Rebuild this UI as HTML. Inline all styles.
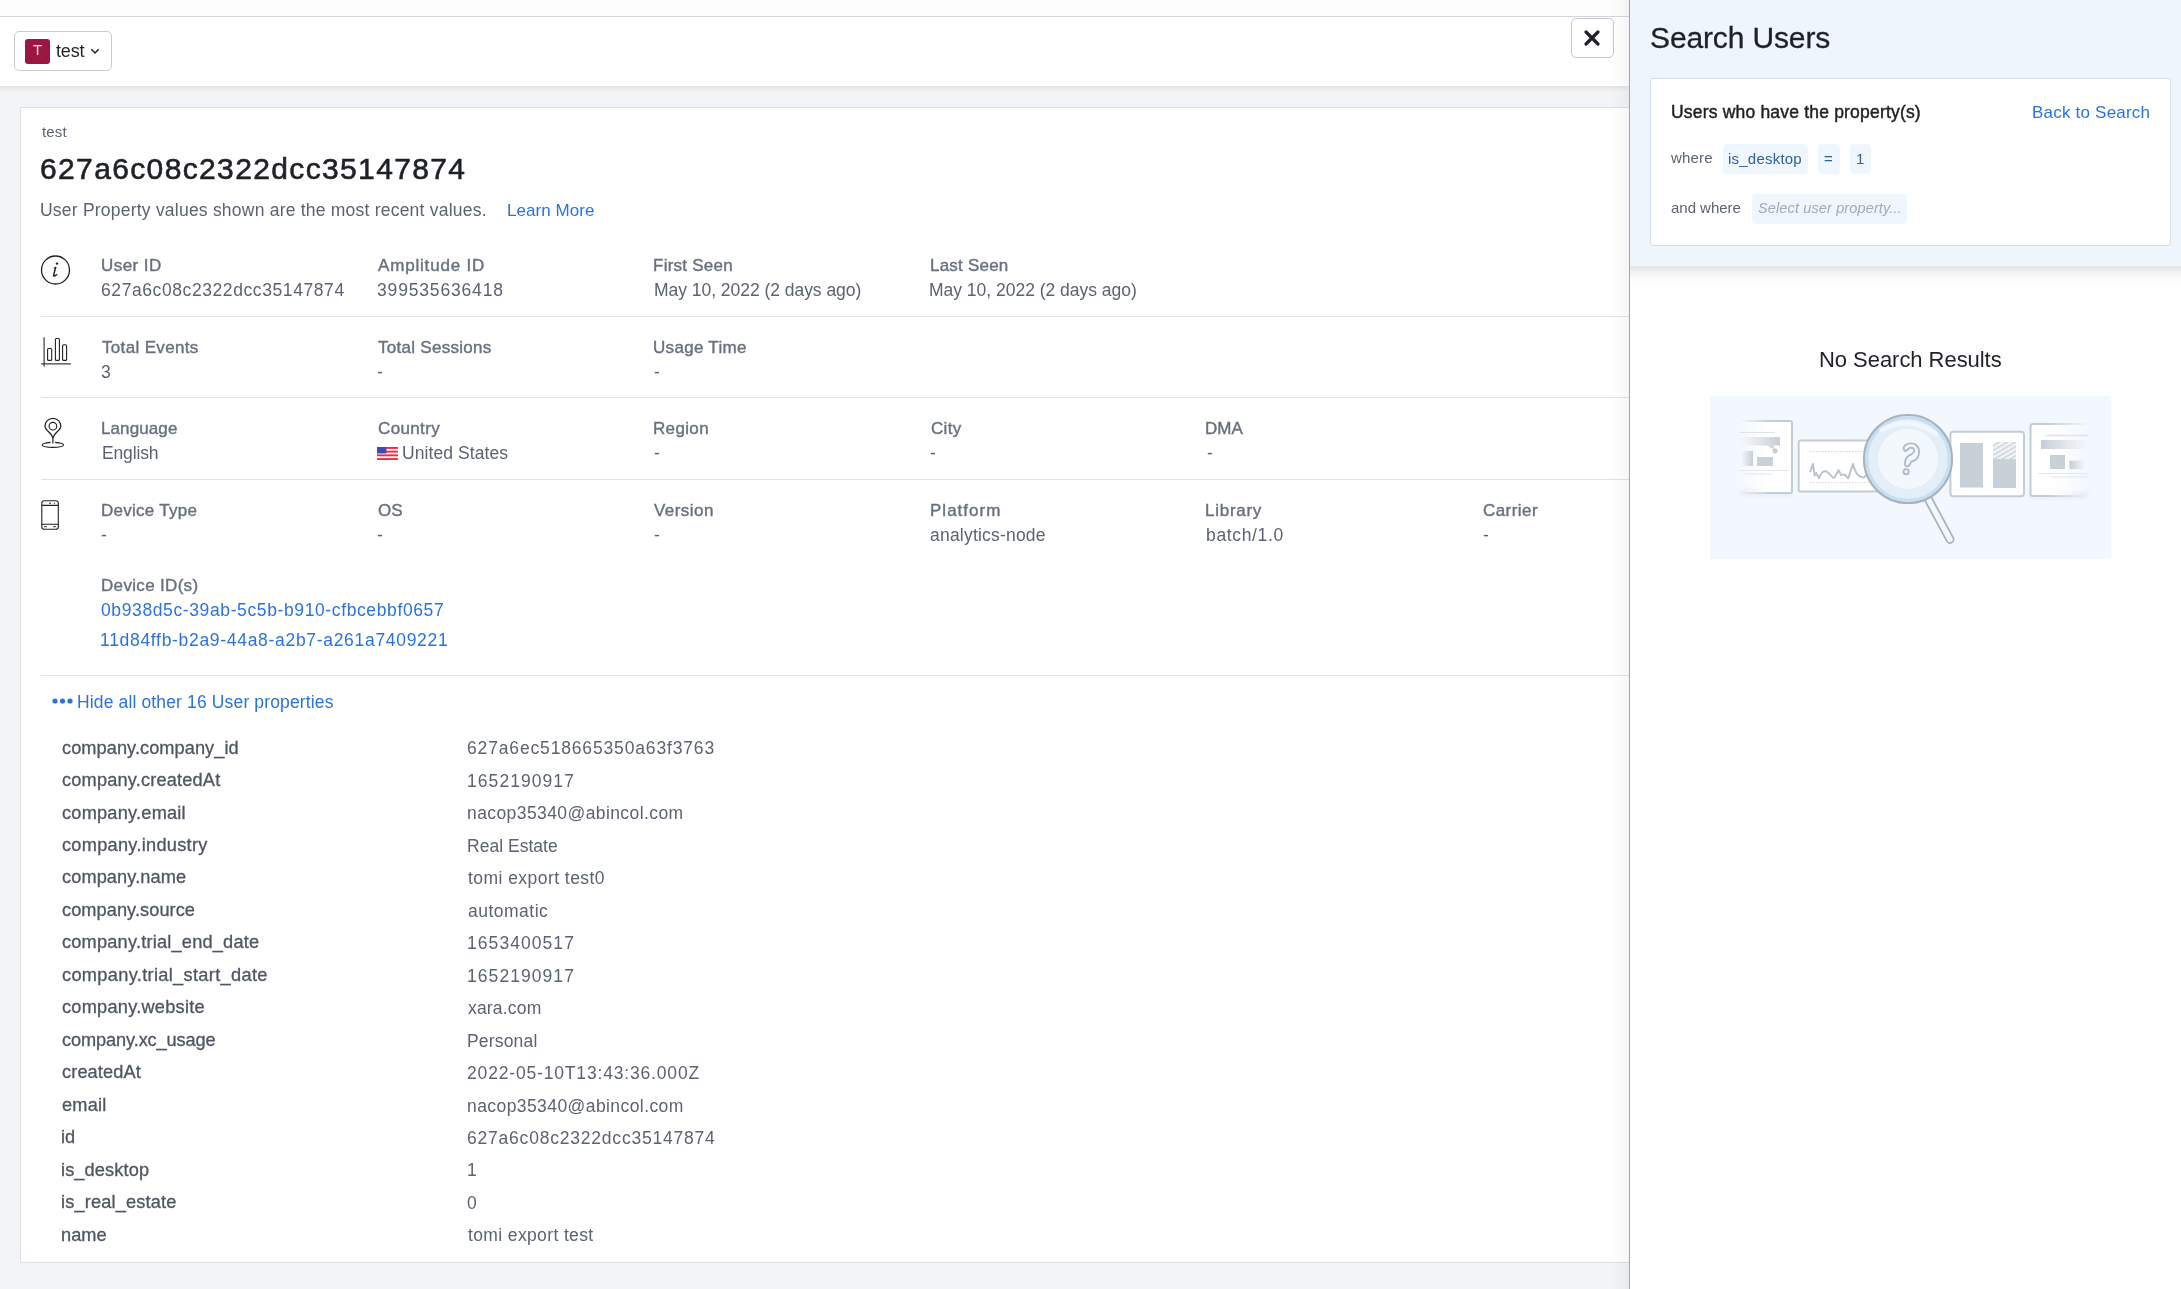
<!DOCTYPE html>
<html><head><meta charset="utf-8"><style>
*{box-sizing:border-box;margin:0;padding:0}
html,body{width:2181px;height:1289px;overflow:hidden}
body{position:relative;background:#f3f4f6;font-family:"Liberation Sans",sans-serif;color:#5b6271;-webkit-font-smoothing:antialiased}
.a{position:absolute;white-space:nowrap}
#topstrip{left:0;top:0;width:1629px;height:17px;background:#fdfdfd;border-bottom:1px solid #d6d8dd}
#header{left:-12px;top:17px;width:1641px;height:69px;background:#fff;box-shadow:0 2px 5px rgba(0,0,0,.09)}
#dd{left:14px;top:31px;width:98px;height:40px;border:1px solid #c8cbd2;border-radius:5px;background:#fff}
#ddsq{left:25px;top:39px;width:25px;height:25px;background:#9b1641;border-radius:3px;color:#f3d3dc;font-size:15px;text-align:center;line-height:21px;will-change:transform}
#close{left:1571px;top:18px;width:43px;height:40px;border:1px solid #c6c9d0;border-radius:5px;background:#fff}
#card{left:20px;top:107px;width:1640px;height:1156px;background:#fff;border:1px solid #dcdee3}
.hr{position:absolute;left:41px;width:1600px;height:1px;background:#dfe1e5}
#panel{left:1629px;top:-30px;width:552px;height:1360px;background:#fefefe;border-left:1px solid #a2a6af;box-shadow:-6px 0 14px rgba(0,0,0,.05)}
#ptop{left:1630px;top:0;width:551px;height:266px;background:#eef5fd}
#ptopsh{left:1630px;top:266px;width:551px;height:18px;background:linear-gradient(rgba(0,0,0,.105),rgba(0,0,0,.045) 35%,rgba(0,0,0,.012) 70%,rgba(0,0,0,0))}
#pcard{left:1650px;top:78px;width:521px;height:168px;background:#fff;border:1px solid #d9dce2;border-radius:3px}
.chip{position:absolute;background:#eff6fe;border-radius:4px}
.t{position:absolute;white-space:nowrap;will-change:transform}
.dd{color:#1f2327}
.sub{color:#5b6271}
.title{color:#1e2125;-webkit-text-stroke:0.6px #1e2125}
.val{color:#5b6271}
.lnk{color:#2a73de}
.lbl{color:#687080;-webkit-text-stroke:0.4px #687080}
.key{color:#4e5563;-webkit-text-stroke:0.3px #4e5563}
.ptitle{color:#1e2125;-webkit-text-stroke:0.3px #1e2125}
.pbold{color:#1e2125;-webkit-text-stroke:0.45px #1e2125}
.small{color:#5b6271}
.chipt{color:#2f5ea5}
.ph{color:#a4aab4;font-style:italic}
.nsr{color:#1e2125}
</style></head><body>
<div class="a" id="topstrip"></div>
<div class="a" id="header"></div>
<div class="a" id="dd"></div>
<div class="a" id="ddsq">T</div>
<svg class="a" style="left:90px;top:47px" width="10" height="8" viewBox="0 0 10 8"><path d="M1.3 2.3 L5 6 L8.7 2.3" fill="none" stroke="#222" stroke-width="1.5"/></svg>
<div class="a" id="close"></div>
<svg class="a" style="left:1583px;top:29px" width="18" height="18" viewBox="0 0 18 18"><path d="M3 3 L15 15 M15 3 L3 15" stroke="#1f2124" stroke-width="3.2" stroke-linecap="round"/></svg>
<div class="a" id="card"></div>
<div class="hr" style="top:316px"></div>
<div class="hr" style="top:397px"></div>
<div class="hr" style="top:479px"></div>
<div class="hr" style="top:675px"></div>
<svg class="a" style="left:40px;top:255px" width="32" height="32" viewBox="0 0 32 32"><circle cx="15.5" cy="15" r="14" fill="none" stroke="#1f2124" stroke-width="1.3"/><circle cx="17" cy="8.6" r="1.2" fill="#1f2124"/><path d="M15.6 12.5 L13.6 20.2 Q13.3 21.6 14.8 20.8 L16.6 19.6" fill="none" stroke="#1f2124" stroke-width="1.4" stroke-linecap="round"/><path d="M14.2 13 L15.8 12.5" stroke="#1f2124" stroke-width="1.2" stroke-linecap="round"/></svg>
<svg class="a" style="left:36px;top:330px" width="40" height="40" viewBox="0 0 40 40"><path d="M8.1 7.3 V36.8 M5.1 33.8 H34.8" stroke="#3a3e45" stroke-width="1.2" fill="none"/><rect x="11.6" y="18.5" width="4.1" height="11.9" rx="1" fill="none" stroke="#1f2124" stroke-width="1.1"/><rect x="19.4" y="8.5" width="4" height="21.9" rx="1" fill="none" stroke="#1f2124" stroke-width="1.1"/><rect x="26.6" y="14.8" width="4" height="15.6" rx="1" fill="none" stroke="#1f2124" stroke-width="1.1"/></svg>
<svg class="a" style="left:36px;top:410px" width="40" height="40" viewBox="0 0 40 40"><path d="M16.9 33.5 V28.5 C16.3 25 14 23 11.6 20.8 C9.8 19 8.9 17.8 8.9 16.3 A8 8 0 0 1 24.9 16.3 C24.9 17.8 24 19 22.2 20.8 C19.8 23 17.5 25 16.9 28.5" fill="none" stroke="#1f2124" stroke-width="1.2"/><circle cx="16.9" cy="16.2" r="3.8" fill="none" stroke="#1f2124" stroke-width="1.15"/><path d="M14.6 32.4 Q6.2 33.2 6.2 34.8 Q6.2 37.4 16.9 37.4 Q27.5 37.4 27.5 34.8 Q27.5 33.2 19.1 32.4" fill="none" stroke="#1f2124" stroke-width="1.1"/></svg>
<svg class="a" style="left:36px;top:495px" width="40" height="40" viewBox="0 0 40 40"><rect x="5.8" y="5.8" width="16.5" height="28.5" rx="2.6" fill="none" stroke="#1f2124" stroke-width="1.1"/><path d="M5.8 10.4 H22.3 M5.8 29.2 H22.3" stroke="#1f2124" stroke-width="1.1"/><path d="M13 8.2 H15" stroke="#1f2124" stroke-width="1"/><circle cx="18.5" cy="8.2" r="0.6" fill="#1f2124"/><path d="M8.2 31.7 H10.8 M17.2 31.7 H19.8" stroke="#1f2124" stroke-width="1"/></svg>
<svg class="a" style="left:377px;top:447px" width="21" height="13" viewBox="0 0 21 13"><rect width="21" height="13" fill="#fff"/><g fill="#e8313c"><rect y="0" width="21" height="1.9"/><rect y="3.7" width="21" height="1.9"/><rect y="7.4" width="21" height="1.9"/><rect y="11.1" width="21" height="1.9"/></g><rect width="9.5" height="6.5" fill="#4149b0"/></svg>
<svg class="a" style="left:52px;top:697px" width="22" height="8" viewBox="0 0 22 8"><circle cx="3" cy="4" r="2.6" fill="#2a73de"/><circle cx="10.5" cy="4" r="2.6" fill="#2a73de"/><circle cx="18" cy="4" r="2.6" fill="#2a73de"/></svg>
<div class="t dd" id="ddtest" style="left:56.00px;top:40.46px;font-size:18px;line-height:22px;letter-spacing:-0.180px">test</div>
<div class="t sub" id="smalltest" style="left:41.90px;top:122.80px;font-size:15px;line-height:18px;letter-spacing:0.180px">test</div>
<div class="t title" id="title" style="left:40.00px;top:150.80px;font-size:30px;line-height:36px;letter-spacing:1.361px">627a6c08c2322dcc35147874</div>
<div class="t val" id="subtitle" style="left:40.10px;top:200.44px;font-size:17.5px;line-height:21px;letter-spacing:0.221px">User Property values shown are the most recent values.</div>
<div class="t lnk" id="learn" style="left:507.46px;top:201.11px;font-size:17px;line-height:20px;letter-spacing:0.060px">Learn More</div>
<div class="t lbl" id="l00" style="left:101.00px;top:256.11px;font-size:17px;line-height:20px;letter-spacing:0.450px">User ID</div>
<div class="t val" id="v00" style="left:101.00px;top:280.44px;font-size:17.5px;line-height:21px;letter-spacing:0.587px">627a6c08c2322dcc35147874</div>
<div class="t lbl" id="l01" style="left:378.30px;top:256.11px;font-size:17px;line-height:20px;letter-spacing:0.818px">Amplitude ID</div>
<div class="t val" id="v01" style="left:377.40px;top:280.44px;font-size:17.5px;line-height:21px;letter-spacing:0.835px">399535636418</div>
<div class="t lbl" id="l02" style="left:653.35px;top:256.11px;font-size:17px;line-height:20px;letter-spacing:0.250px">First Seen</div>
<div class="t val" id="v02" style="left:653.80px;top:280.44px;font-size:17.5px;line-height:21px;letter-spacing:-0.037px">May 10, 2022 (2 days ago)</div>
<div class="t lbl" id="l03" style="left:929.75px;top:256.11px;font-size:17px;line-height:20px;letter-spacing:0.214px">Last Seen</div>
<div class="t val" id="v03" style="left:929.30px;top:280.44px;font-size:17.5px;line-height:21px;letter-spacing:-0.015px">May 10, 2022 (2 days ago)</div>
<div class="t lbl" id="l10" style="left:102.17px;top:338.11px;font-size:17px;line-height:20px;letter-spacing:0.335px">Total Events</div>
<div class="t val" id="v10" style="left:101.00px;top:362.44px;font-size:17.5px;line-height:21px">3</div>
<div class="t lbl" id="l11" style="left:378.07px;top:338.11px;font-size:17px;line-height:20px;letter-spacing:0.280px">Total Sessions</div>
<div class="t val" id="v11" style="left:377.40px;top:362.44px;font-size:17.5px;line-height:21px">-</div>
<div class="t lbl" id="l12" style="left:652.99px;top:338.11px;font-size:17px;line-height:20px;letter-spacing:0.300px">Usage Time</div>
<div class="t val" id="v12" style="left:653.80px;top:362.44px;font-size:17.5px;line-height:21px">-</div>
<div class="t lbl" id="l20" style="left:101.09px;top:419.11px;font-size:17px;line-height:20px;letter-spacing:0.103px">Language</div>
<div class="t val" id="v20" style="left:101.54px;top:443.44px;font-size:17.5px;line-height:21px;letter-spacing:-0.150px">English</div>
<div class="t lbl" id="l21" style="left:378.07px;top:419.11px;font-size:17px;line-height:20px;letter-spacing:0.368px">Country</div>
<div class="t val" id="v21" style="left:401.86px;top:443.44px;font-size:17.5px;line-height:21px;letter-spacing:0.075px">United States</div>
<div class="t lbl" id="l22" style="left:652.99px;top:419.11px;font-size:17px;line-height:20px;letter-spacing:0.342px">Region</div>
<div class="t val" id="v22" style="left:653.80px;top:443.44px;font-size:17.5px;line-height:21px">-</div>
<div class="t lbl" id="l23" style="left:930.65px;top:419.11px;font-size:17px;line-height:20px;letter-spacing:0.330px">City</div>
<div class="t val" id="v23" style="left:930.20px;top:443.44px;font-size:17.5px;line-height:21px">-</div>
<div class="t lbl" id="l24" style="left:1205.25px;top:419.11px;font-size:17px;line-height:20px">DMA</div>
<div class="t val" id="v24" style="left:1206.60px;top:443.44px;font-size:17.5px;line-height:21px">-</div>
<div class="t lbl" id="l30" style="left:101.00px;top:501.11px;font-size:17px;line-height:20px;letter-spacing:0.261px">Device Type</div>
<div class="t val" id="v30" style="left:101.00px;top:525.44px;font-size:17.5px;line-height:21px">-</div>
<div class="t lbl" id="l31" style="left:378.07px;top:501.11px;font-size:17px;line-height:20px">OS</div>
<div class="t val" id="v31" style="left:377.40px;top:525.44px;font-size:17.5px;line-height:21px">-</div>
<div class="t lbl" id="l32" style="left:653.89px;top:501.11px;font-size:17px;line-height:20px;letter-spacing:0.450px">Version</div>
<div class="t val" id="v32" style="left:653.80px;top:525.44px;font-size:17.5px;line-height:21px">-</div>
<div class="t lbl" id="l33" style="left:929.75px;top:501.11px;font-size:17px;line-height:20px;letter-spacing:1.016px">Platform</div>
<div class="t val" id="v33" style="left:930.20px;top:525.44px;font-size:17.5px;line-height:21px;letter-spacing:0.208px">analytics-node</div>
<div class="t lbl" id="l34" style="left:1205.25px;top:501.11px;font-size:17px;line-height:20px;letter-spacing:0.735px">Library</div>
<div class="t val" id="v34" style="left:1205.70px;top:525.44px;font-size:17.5px;line-height:21px;letter-spacing:0.653px">batch/1.0</div>
<div class="t lbl" id="l35" style="left:1482.64px;top:501.11px;font-size:17px;line-height:20px;letter-spacing:0.435px">Carrier</div>
<div class="t val" id="v35" style="left:1483.00px;top:525.44px;font-size:17.5px;line-height:21px">-</div>
<div class="t lbl" id="devid" style="left:101.00px;top:576.11px;font-size:17px;line-height:20px;letter-spacing:0.327px">Device ID(s)</div>
<div class="t lnk" id="link1" style="left:101.00px;top:600.44px;font-size:17.5px;line-height:21px;letter-spacing:0.617px">0b938d5c-39ab-5c5b-b910-cfbcebbf0657</div>
<div class="t lnk" id="link2" style="left:100.10px;top:630.44px;font-size:17.5px;line-height:21px;letter-spacing:0.694px">11d84ffb-b2a9-44a8-a2b7-a261a7409221</div>
<div class="t lnk" id="hide" style="left:77.00px;top:691.94px;font-size:17.5px;line-height:21px;letter-spacing:0.141px">Hide all other 16 User properties</div>
<div class="t key" id="k0" style="left:61.72px;top:736.59px;font-size:18.2px;line-height:22px;letter-spacing:0.064px">company.company_id</div>
<div class="t val" id="p0" style="left:467.36px;top:738.34px;font-size:17.5px;line-height:21px;letter-spacing:0.845px">627a6ec518665350a63f3763</div>
<div class="t key" id="k1" style="left:61.72px;top:769.06px;font-size:18.2px;line-height:22px;letter-spacing:0.180px">company.createdAt</div>
<div class="t val" id="p1" style="left:467.36px;top:770.81px;font-size:17.5px;line-height:21px;letter-spacing:1.060px">1652190917</div>
<div class="t key" id="k2" style="left:61.72px;top:801.53px;font-size:18.2px;line-height:22px;letter-spacing:0.225px">company.email</div>
<div class="t val" id="p2" style="left:467.36px;top:803.28px;font-size:17.5px;line-height:21px;letter-spacing:0.411px">nacop35340@abincol.com</div>
<div class="t key" id="k3" style="left:61.72px;top:834.00px;font-size:18.2px;line-height:22px;letter-spacing:0.276px">company.industry</div>
<div class="t val" id="p3" style="left:467.36px;top:835.75px;font-size:17.5px;line-height:21px;letter-spacing:0.018px">Real Estate</div>
<div class="t key" id="k4" style="left:61.72px;top:866.47px;font-size:18.2px;line-height:22px;letter-spacing:0.098px">company.name</div>
<div class="t val" id="p4" style="left:468.26px;top:868.22px;font-size:17.5px;line-height:21px;letter-spacing:0.450px">tomi export test0</div>
<div class="t key" id="k5" style="left:61.72px;top:898.94px;font-size:18.2px;line-height:22px;letter-spacing:0.069px">company.source</div>
<div class="t val" id="p5" style="left:468.26px;top:900.69px;font-size:17.5px;line-height:21px;letter-spacing:0.495px">automatic</div>
<div class="t key" id="k6" style="left:61.72px;top:931.41px;font-size:18.2px;line-height:22px;letter-spacing:0.206px">company.trial_end_date</div>
<div class="t val" id="p6" style="left:467.36px;top:933.16px;font-size:17.5px;line-height:21px;letter-spacing:1.060px">1653400517</div>
<div class="t key" id="k7" style="left:61.72px;top:963.88px;font-size:18.2px;line-height:22px;letter-spacing:0.329px">company.trial_start_date</div>
<div class="t val" id="p7" style="left:467.36px;top:965.63px;font-size:17.5px;line-height:21px;letter-spacing:1.060px">1652190917</div>
<div class="t key" id="k8" style="left:61.72px;top:996.35px;font-size:18.2px;line-height:22px;letter-spacing:0.244px">company.website</div>
<div class="t val" id="p8" style="left:468.26px;top:998.10px;font-size:17.5px;line-height:21px;letter-spacing:0.180px">xara.com</div>
<div class="t key" id="k9" style="left:61.72px;top:1028.82px;font-size:18.2px;line-height:22px;letter-spacing:-0.108px">company.xc_usage</div>
<div class="t val" id="p9" style="left:467.36px;top:1030.57px;font-size:17.5px;line-height:21px;letter-spacing:0.180px">Personal</div>
<div class="t key" id="k10" style="left:61.72px;top:1061.29px;font-size:18.2px;line-height:22px;letter-spacing:0.113px">createdAt</div>
<div class="t val" id="p10" style="left:467.36px;top:1063.04px;font-size:17.5px;line-height:21px;letter-spacing:0.830px">2022-05-10T13:43:36.000Z</div>
<div class="t key" id="k11" style="left:61.72px;top:1093.76px;font-size:18.2px;line-height:22px;letter-spacing:0.225px">email</div>
<div class="t val" id="p11" style="left:467.36px;top:1095.51px;font-size:17.5px;line-height:21px;letter-spacing:0.420px">nacop35340@abincol.com</div>
<div class="t key" id="k12" style="left:60.82px;top:1126.23px;font-size:18.2px;line-height:22px">id</div>
<div class="t val" id="p12" style="left:467.36px;top:1127.98px;font-size:17.5px;line-height:21px;letter-spacing:0.790px">627a6c08c2322dcc35147874</div>
<div class="t key" id="k13" style="left:60.82px;top:1158.70px;font-size:18.2px;line-height:22px;letter-spacing:0.120px">is_desktop</div>
<div class="t val" id="p13" style="left:467.00px;top:1160.45px;font-size:17.5px;line-height:21px">1</div>
<div class="t key" id="k14" style="left:60.82px;top:1191.17px;font-size:18.2px;line-height:22px;letter-spacing:0.166px">is_real_estate</div>
<div class="t val" id="p14" style="left:467.00px;top:1192.92px;font-size:17.5px;line-height:21px">0</div>
<div class="t key" id="k15" style="left:60.82px;top:1223.64px;font-size:18.2px;line-height:22px;letter-spacing:0.060px">name</div>
<div class="t val" id="p15" style="left:468.26px;top:1225.39px;font-size:17.5px;line-height:21px;letter-spacing:0.372px">tomi export test</div>
<div class="a" id="panel"></div>
<div class="a" id="ptop"></div>
<div class="a" id="ptopsh"></div>
<div class="a" id="pcard"></div>
<div class="chip" style="left:1723px;top:144px;width:85px;height:30px"></div>
<div class="chip" style="left:1818px;top:144px;width:22px;height:30px"></div>
<div class="chip" style="left:1850px;top:144px;width:21px;height:30px"></div>
<div class="chip" style="left:1752px;top:194px;width:155px;height:30px"></div>
<svg class="a" style="left:1710px;top:396px" width="401" height="163" viewBox="0 0 401 163">
<defs>
<linearGradient id="fadeL" x1="0" x2="1" y1="0" y2="0"><stop offset="0" stop-color="#fff" stop-opacity="0"/><stop offset="0.55" stop-color="#fff" stop-opacity="1"/></linearGradient>
<linearGradient id="fadeR" x1="0" x2="1" y1="0" y2="0"><stop offset="0.35" stop-color="#fff" stop-opacity="1"/><stop offset="1" stop-color="#fff" stop-opacity="0"/></linearGradient>
<linearGradient id="gL" x1="0" x2="1"><stop offset="0" stop-color="#c3ccd5" stop-opacity="0"/><stop offset="0.6" stop-color="#c3ccd5" stop-opacity="1"/></linearGradient>
<linearGradient id="gR" x1="0" x2="1"><stop offset="0.3" stop-color="#c3ccd5" stop-opacity="1"/><stop offset="1" stop-color="#c3ccd5" stop-opacity="0"/></linearGradient>
<linearGradient id="barL" x1="0" x2="1"><stop offset="0" stop-color="#c5cdd6" stop-opacity="0"/><stop offset="1" stop-color="#c5cdd6" stop-opacity="1"/></linearGradient>
<linearGradient id="barR" x1="0" x2="1"><stop offset="0" stop-color="#c5cdd6" stop-opacity="1"/><stop offset="1" stop-color="#c5cdd6" stop-opacity="0"/></linearGradient>
<pattern id="hatch" width="4" height="4" patternUnits="userSpaceOnUse" patternTransform="rotate(-30)"><rect width="4" height="4" fill="#f1f3f6"/><rect width="4" height="1.3" fill="#c8d0d8"/></pattern>
<filter id="sh" x="-20%" y="-20%" width="140%" height="160%"><feGaussianBlur stdDeviation="2.5"/></filter>
</defs>
<rect width="401" height="163" fill="#f3f8fe"/>
<!-- card1 faded left -->
<rect x="30" y="93" width="52" height="6" fill="#c9d3de" opacity="0.35" filter="url(#sh)"/>
<rect x="29" y="25" width="53" height="72" fill="url(#fadeL)"/>
<path d="M29 25 H80 Q82 25 82 27 V95 Q82 97 80 97 H29" fill="none" stroke="url(#gL)" stroke-width="2"/>
<path d="M30 36.5 H65" stroke="#dde3e9" stroke-width="1"/>
<rect x="30" y="41" width="40" height="8.5" fill="url(#barL)"/>
<path d="M58 49.5 L63 53 L64 49.5Z" fill="#c5cdd6"/>
<circle cx="65" cy="54.8" r="2.6" fill="#c5cdd6"/>
<rect x="31" y="55" width="12" height="15" fill="url(#barL)"/>
<rect x="47" y="61" width="16" height="9" fill="#c8d0d8"/>
<path d="M30 74.5 H79 M35 78 H63" stroke="#e2e7ec" stroke-width="1"/>
<!-- card2 chart -->
<rect x="88.7" y="44.5" width="100" height="51" rx="2" fill="#fff" stroke="#c3ccd5" stroke-width="2"/>
<path d="M100 55.5 H185 M100 86.6 H185" stroke="#cfd6dd" stroke-width="1" stroke-dasharray="1.5 1.5"/>
<path d="M100.2 75.5 L102.9 68 L104.7 79.5 L106.3 77.1 L109 82.2 Q111.5 75.2 114.5 75.2 Q118 75.2 121 79.5 Q123 82.2 124.5 81.5 L128.7 74.1 L130.8 78.8 L134.8 78.8 L138.2 82.2 L143 68 Q145 76 148 79 Q151 81.6 153.8 81.6 L158 78 L165 79" fill="none" stroke="#bac3cc" stroke-width="2" stroke-linejoin="round" stroke-linecap="round"/>
<!-- card3 bars -->
<rect x="240.4" y="35.7" width="73.6" height="64.5" rx="3" fill="#fff" stroke="#c3ccd5" stroke-width="2"/>
<rect x="250" y="47" width="23" height="44.5" fill="#c8d0d8"/>
<rect x="283" y="46" width="23" height="17" fill="url(#hatch)"/>
<rect x="283" y="63" width="23" height="29" fill="#c8d0d8"/>
<!-- card4 faded right -->
<rect x="320" y="96" width="58" height="6" fill="#c9d3de" opacity="0.35" filter="url(#sh)"/>
<rect x="320.5" y="28" width="58" height="72" fill="url(#fadeR)"/>
<path d="M378 28 H323 Q320.5 28 320.5 30.5 V97.5 Q320.5 100 323 100 H378" fill="none" stroke="url(#gR)" stroke-width="2"/>
<path d="M336 39.5 H378" stroke="#dde3e9" stroke-width="1.5"/>
<rect x="331" y="44" width="47" height="9" fill="url(#barR)"/>
<rect x="340" y="59" width="15" height="14" fill="#c8d0d8"/>
<rect x="359.5" y="64.6" width="16" height="8.4" fill="url(#barR)"/>
<path d="M328 77.5 H378 M341 81 H378" stroke="#e2e7ec" stroke-width="1"/>
<!-- magnifier -->
<line x1="218" y1="102.6" x2="240" y2="143.4" stroke="#aab3bd" stroke-width="9" stroke-linecap="round"/>
<line x1="218" y1="102.6" x2="240" y2="143.4" stroke="#f3f8fe" stroke-width="5.4" stroke-linecap="round"/>
<circle cx="198" cy="63" r="44" fill="#e3eef8" stroke="#aab3bd" stroke-width="2.2"/>
<circle cx="198" cy="63" r="41.3" fill="none" stroke="#c6dff3" stroke-width="3"/>
<circle cx="198" cy="63" r="30" fill="#f3f8fd"/>
<path d="M172 34 Q198 18 226 38" fill="none" stroke="#f1f6fb" stroke-width="5" stroke-linecap="round" opacity="0.9"/>
<path d="M195.5 55 C193 54 193 51 195 49.5 C198 47 203 46.5 206 49 C209 51.5 209.5 56 208.5 59.5 C207.5 63 204 65 201.5 65.5 C200.5 66 200.5 68 199 69.5 C197.5 71 195 70.5 195 68 C195 64 196 61.5 199 59.5 C201.5 58 204 57.5 204.3 55 C204.5 52.5 202.5 51.5 200.5 51.8 C198.5 52 198 54 195.5 55 Z" fill="none" stroke="#b0bac4" stroke-width="1.9" stroke-linejoin="round"/>
<circle cx="196.1" cy="75.7" r="2.6" fill="none" stroke="#b0bac4" stroke-width="1.9"/>
</svg>

<div class="t ptitle" id="searchusers" style="left:1649.54px;top:20.11px;font-size:30px;line-height:36px;letter-spacing:-0.131px">Search Users</div>
<div class="t pbold" id="userswho" style="left:1670.82px;top:102.34px;font-size:17.5px;line-height:21px;letter-spacing:0.192px">Users who have the property(s)</div>
<div class="t lnk" id="back" style="left:2032.10px;top:103.31px;font-size:17px;line-height:20px;letter-spacing:0.208px">Back to Search</div>
<div class="t small" id="where" style="left:1671.18px;top:148.80px;font-size:15px;line-height:18px;letter-spacing:0.180px">where</div>
<div class="t chipt" id="isdesk" style="left:1728.10px;top:150.40px;font-size:15px;line-height:18px;letter-spacing:0.220px">is_desktop</div>
<div class="t chipt" id="eq" style="left:1824.00px;top:150.40px;font-size:15px;line-height:18px">=</div>
<div class="t chipt" id="one" style="left:1856.00px;top:150.40px;font-size:15px;line-height:18px">1</div>
<div class="t small" id="andwhere" style="left:1671.18px;top:198.80px;font-size:15px;line-height:18px;letter-spacing:-0.022px">and where</div>
<div class="t ph" id="placeholder" style="left:1757.82px;top:200.18px;font-size:14.5px;line-height:17px;letter-spacing:0.131px">Select user property...</div>
<div class="t nsr" id="nosearch" style="left:1818.74px;top:347.28px;font-size:22px;line-height:26px;letter-spacing:-0.045px">No Search Results</div>
</body></html>
